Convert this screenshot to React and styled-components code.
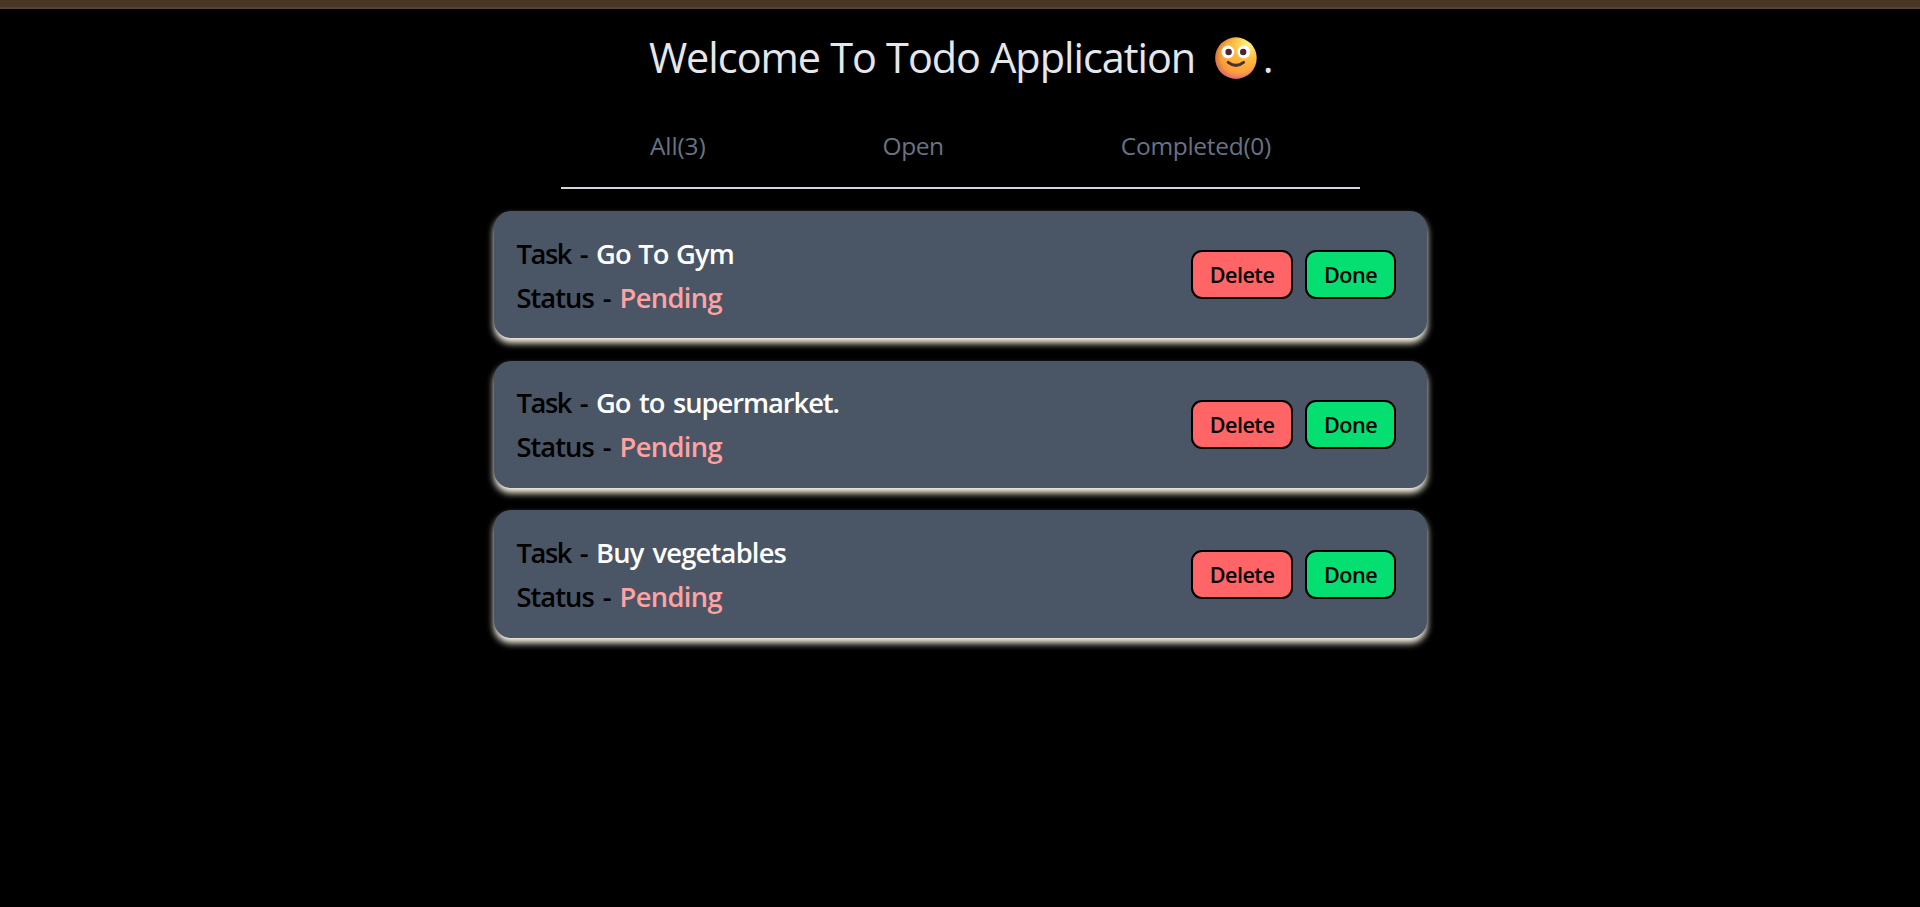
import React from "react";
import styled, { createGlobalStyle } from "styled-components";

const GlobalStyle = createGlobalStyle`
  *, *::before, *::after { box-sizing: border-box; }
  body {
    margin: 0;
    min-height: 100vh;
    background: #000;
    font-family: "Segoe UI", "Open Sans", "Noto Sans", sans-serif;
    overflow: hidden;
  }
`;

const TopBar = styled.div`
  height: 9px;
  background: #4b3626;
  border-bottom: 2px solid #514137;
`;

const Page = styled.main`
  display: flex;
  flex-direction: column;
  align-items: center;
  padding-top: 18px;
`;

const Title = styled.h1`
  display: flex;
  align-items: center;
  margin: 0;
  padding-left: 1.5px;
  font-size: 41.4px;
  font-weight: 400;
  line-height: 60px;
  letter-spacing: -1px;
  word-spacing: 0.4px;
  color: #e5e7eb;
`;

const Emoji = styled.svg`
  width: 42px;
  height: 42px;
  margin: 2px 6px 0 19.5px;
`;

const Tabs = styled.nav`
  display: flex;
  justify-content: space-around;
  width: 799px;
  height: 64px;
  margin-top: 38px;
  padding-left: 1px;
  border-bottom: 2px solid #d1d5dc;
`;

const Tab = styled.a`
  font-size: 24.5px;
  line-height: 41px;
  letter-spacing: ${(p) => p.$track ?? -0.4}px;
  color: #6a7282;
`;

const TaskList = styled.ul`
  display: flex;
  flex-direction: column;
  gap: 22.4px;
  width: 933px;
  margin: 22px 0 0;
  padding: 0;
  list-style: none;
`;

const Card = styled.li`
  display: flex;
  align-items: center;
  justify-content: space-between;
  height: 127.3px;
  padding: 0 31px 0 23px;
  border-radius: 17px;
  background: #4a5565;
  box-shadow: 0 5px 7px #fffaeb;
`;

const Details = styled.div`
  padding-top: 1.8px;
`;

const Line = styled.div`
  display: flex;
  font-size: 27.3px;
  font-weight: 600;
  line-height: 44px;
  white-space: pre;
`;

const Label = styled.span`
  width: ${(p) => p.$width}px;
  letter-spacing: ${(p) => p.$track}px;
  word-spacing: 3px;
  color: #000;
`;

const Value = styled.span`
  letter-spacing: ${(p) => p.$track}px;
  word-spacing: ${(p) => p.$wordGap ?? 2.6}px;
  color: ${(p) => (p.$pending ? "#ffa2a2" : "#fff")};
`;

const Actions = styled.div`
  display: flex;
  gap: 12px;
`;

const Button = styled.button`
  width: ${(p) => p.$width}px;
  height: 49px;
  padding: 0 0 0 1px;
  border: 2px solid #000;
  border-radius: 11px;
  background: ${(p) => (p.$danger ? "#ff6467" : "#05df72")};
  font: 600 21.6px/45px "Segoe UI", "Open Sans", "Noto Sans", sans-serif;
  letter-spacing: -0.5px;
  color: #000;
`;

const tasks = [
  { name: "Go To Gym", track: -0.85, wordGap: 1.2 },
  { name: "Go to supermarket.", track: -1.04 },
  { name: "Buy vegetables", track: -0.78 },
];

function SmileyFace() {
  return (
    <Emoji viewBox="0 0 42 42" role="img" aria-label="smiling face">
      <defs>
        <radialGradient id="skin" cx="0.78" cy="0.18" r="0.9">
          <stop offset="0" stopColor="#fff478" />
          <stop offset="0.42" stopColor="#ffb93f" />
          <stop offset="0.78" stopColor="#ffa239" />
          <stop offset="1" stopColor="#f08a40" />
        </radialGradient>
        <radialGradient id="blush" cx="0.5" cy="0.32" r="0.7">
          <stop offset="0.78" stopColor="#e8649c" stopOpacity="0" />
          <stop offset="1" stopColor="#e05fb0" stopOpacity="0.85" />
        </radialGradient>
        <radialGradient id="shade" cx="0.62" cy="0.5" r="0.64">
          <stop offset="0.72" stopColor="#c9743a" stopOpacity="0" />
          <stop offset="1" stopColor="#b9633f" stopOpacity="0.7" />
        </radialGradient>
      </defs>
      <circle cx="21" cy="21" r="20.7" fill="url(#skin)" />
      <circle cx="21" cy="21" r="20.7" fill="url(#shade)" />
      <circle cx="21" cy="21" r="20.7" fill="url(#blush)" />
      <circle cx="12.9" cy="15" r="6.4" fill="#fff" />
      <circle cx="28.9" cy="15" r="6.4" fill="#fff" />
      <circle cx="13.6" cy="15" r="3.2" fill="#45293b" />
      <circle cx="28.2" cy="15" r="3.2" fill="#45293b" />
      <path d="M13.2 25.4Q20.9 31.4 28.6 25.4" fill="none" stroke="#4b2f3d" strokeWidth="3" strokeLinecap="round" />
    </Emoji>
  );
}

function TaskCard({ name, track, wordGap }) {
  return (
    <Card>
      <Details>
        <Line>
          <Label $width={79.5} $track={-1.4}>Task - </Label>
          <Value $track={track} $wordGap={wordGap}>{name}</Value>
        </Line>
        <Line>
          <Label $width={103} $track={-0.98}>Status - </Label>
          <Value $pending $track={-0.65}>Pending</Value>
        </Line>
      </Details>
      <Actions>
        <Button $danger $width={102}>Delete</Button>
        <Button $width={91}>Done</Button>
      </Actions>
    </Card>
  );
}

export default function App() {
  return (
    <>
      <GlobalStyle />
      <TopBar />
      <Page>
        <Title>
          <span>Welcome To Todo Application</span>
          <SmileyFace />
          <span>.</span>
        </Title>
        <Tabs>
          <Tab $track={-0.15}>All(3)</Tab>
          <Tab>Open</Tab>
          <Tab $track={-0.3}>Completed(0)</Tab>
        </Tabs>
        <TaskList>
          {tasks.map((t) => (
            <TaskCard key={t.name} {...t} />
          ))}
        </TaskList>
      </Page>
    </>
  );
}
